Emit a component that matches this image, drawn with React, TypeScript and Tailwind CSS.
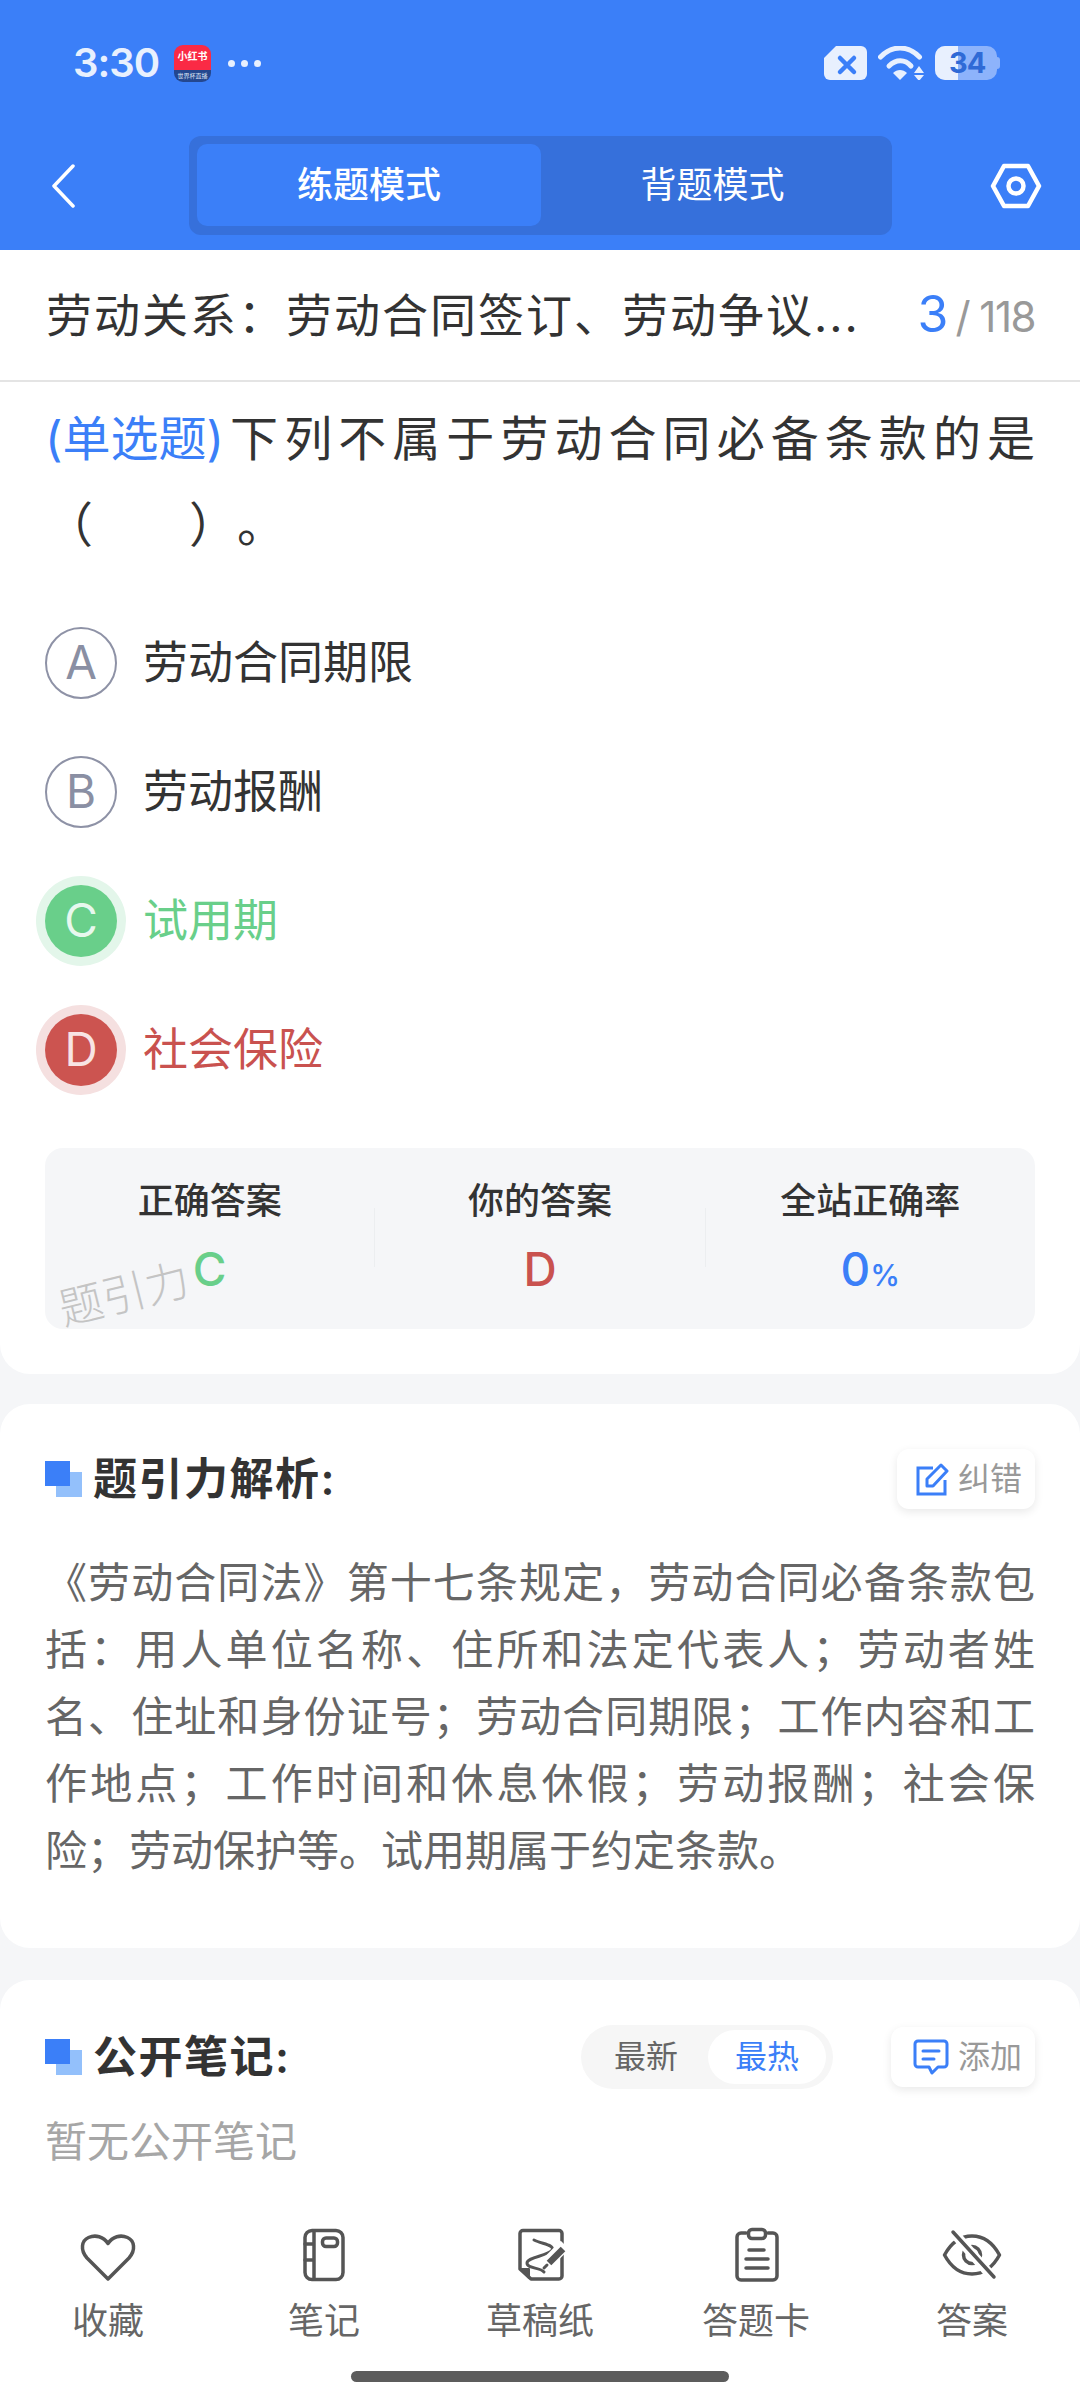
const options = [
  { key: 'A', text: '劳动合同期限', state: 'idle' },
  { key: 'B', text: '劳动报酬', state: 'idle' },
  { key: 'C', text: '试用期', state: 'right' },
  { key: 'D', text: '社会保险', state: 'wrong' },
];

function OptionRow({ label, text, state }: { label: string; text: string; state: string }) {
  let circle = 'border-2 border-[#8e92a6] text-[#8a8fa3]';
  let color = 'text-[#333333]';
  if (state === 'right') {
    circle = 'bg-[#69cf8a] ring-[9px] ring-[#e3f6ea] text-[#e8f8ee]';
    color = 'text-[#69cf8a]';
  }
  if (state === 'wrong') {
    circle = 'bg-[#cc5450] ring-[9px] ring-[#f5e0e0] text-[#f8e4e4]';
    color = 'text-[#c9524f]';
  }
  return (
    <div className="flex items-center h-[129px]">
      <div className={`w-[72px] h-[72px] rounded-full flex items-center justify-center text-[46px] font-normal ${circle}`}>
        {label}
      </div>
      <span className={`ml-[26px] text-[45px] leading-[60px] ${color}`}>{text}</span>
    </div>
  );
}

function SectionMark() {
  return (
    <div className="w-[37px] h-[36px] shrink-0 bg-[linear-gradient(#93c0fb,#93c0fb)] bg-[length:26px_25px] bg-[position:11px_11px] bg-no-repeat">
      <div className="w-[25px] h-[25px] bg-[#3b7ff8]" />
    </div>
  );
}

function SmallAction({ icon, text, width }: { icon: React.ReactNode; text: string; width: string }) {
  return (
    <div className={`h-[60px] ${width} rounded-[12px] bg-white shadow-[0_3px_10px_rgba(0,0,0,0.09)] flex items-center justify-end pr-[13px] gap-[9px]`}>
      {icon}
      <span className="text-[32px] leading-[40px] text-[#999999]">{text}</span>
    </div>
  );
}

function NavIcon({ name }: { name: string }) {
  return (
    <svg width="60" height="60" viewBox="0 0 60 60" fill="none" stroke="#555555" strokeWidth="3.5" strokeLinecap="round" strokeLinejoin="round">
      {name === 'heart' && (
        <path d="M30 54 L9 33 C2 25 3.5 15.5 10.5 12.5 C17.5 9.5 25.5 11.5 30 18.5 C34.5 11.5 42.5 9.5 49.5 12.5 C56.5 15.5 58 25 51 33 Z" />
      )}
      {name === 'note' && (
        <>
          <rect x="11" y="5.5" width="38" height="49" rx="7" />
          <path d="M20 6 V54 M11 19 H20 M11 35 H20" />
          <rect x="28.5" y="13" width="15" height="8.5" rx="3.5" />
        </>
      )}
      {name === 'draft' && (
        <>
          <path d="M13 5.5 H49 a3 3 0 0 1 3 3 V51 a3 3 0 0 1 -3 3 H21 L10 44 V8.5 a3 3 0 0 1 3 -3 Z" />
          <path d="M10.5 44 H19 V53 Z" fill="#555555" strokeWidth="2" />
          <path d="M24 15 C32 19 45 20 42 25 C38 31 17 32 17 38 C17 44 30 42 34 47" strokeWidth="3" />
          <path d="M55 20 L38 37" stroke="#ffffff" strokeWidth="12" strokeLinecap="butt" />
          <path d="M53 24 L39 38" strokeWidth="6.5" strokeLinecap="butt" />
          <path d="M37 40 L34 43" strokeWidth="3" />
        </>
      )}
      {name === 'card' && (
        <>
          <path d="M20 8 H15 a4 4 0 0 0 -4 4 V51 a4 4 0 0 0 4 4 H47 a4 4 0 0 0 4 -4 V12 a4 4 0 0 0 -4 -4 H42" />
          <rect x="22.5" y="4.5" width="17" height="9" rx="3.5" />
          <path d="M23 25 H38 M20 34 H42 M20 43 H42" />
        </>
      )}
      {name === 'eye' && (
        <>
          <path d="M2.5 30 C9 18 19 11 30 11 C41 11 51 18 57.5 30 C51 42 41 49 30 49 C19 49 9 42 2.5 30 Z" />
          <circle cx="30" cy="30" r="8.5" />
          <path d="M11 7 L52 54" stroke="#ffffff" strokeWidth="10" strokeLinecap="butt" />
          <path d="M11 7 L52 52" />
        </>
      )}
    </svg>
  );
}

const navItems = [
  { icon: 'heart', label: '收藏' },
  { icon: 'note', label: '笔记' },
  { icon: 'draft', label: '草稿纸' },
  { icon: 'card', label: '答题卡' },
  { icon: 'eye', label: '答案' },
];

export default function App() {
  return (
    <div className="w-[1080px] h-[2400px] overflow-hidden flex flex-col bg-[#f5f6f8] [font-family:'Inter','Noto_Sans_CJK_SC',sans-serif] [text-spacing-trim:space-all]">
      {/* Header */}
      <header className="bg-[#3b7ff8] h-[250px] shrink-0">
        <div className="h-[126px] flex items-center pl-[73px] pr-[80px]">
          <span className="text-[40px] font-semibold text-[#e8f0fe] tracking-[-1px] leading-none w-[101px]">3:30</span>
          <div className="w-[37px] h-[37px] rounded-[9px] overflow-hidden flex flex-col">
            <div className="h-[25px] bg-[#fa2a45] text-white text-[10px] font-bold leading-[22px] text-center">小红书</div>
            <div className="flex-1 bg-[#24478f] text-[#dfe6f5] text-[6px] leading-[12px] text-center">世界杯直播</div>
          </div>
          <div className="flex gap-[6px] ml-[17px]">
            <span className="w-[7px] h-[7px] rounded-full bg-[#e8f0fe]" />
            <span className="w-[7px] h-[7px] rounded-full bg-[#e8f0fe]" />
            <span className="w-[7px] h-[7px] rounded-full bg-[#e8f0fe]" />
          </div>
          <div className="ml-auto flex items-center gap-[11px]">
            <svg width="43" height="34" viewBox="0 0 43 34">
              <path d="M12 0 H37 a6 6 0 0 1 6 6 V28 a6 6 0 0 1 -6 6 H6 a6 6 0 0 1 -6 -6 V12 Z" fill="#e8f0fe" />
              <path d="M16 12 L30 26 M30 12 L16 26" stroke="#3b7ff8" strokeWidth="4.5" strokeLinecap="round" />
            </svg>
            <svg width="47" height="34" viewBox="0 0 47 34" fill="none" stroke="#e8f0fe" strokeLinecap="round">
              <path d="M2.5 11 C14 -1 30 -1 41.5 11" strokeWidth="5" />
              <path d="M11 20 C18 13 27 13 33 20" strokeWidth="5" />
              <path d="M15 27 C19 23 25 23 29 27 L22 34 Z" fill="#e8f0fe" stroke="none" />
              <path d="M36 27 L41 20 L46 27 Z M36 29 H46 L41 35 Z" fill="#e8f0fe" stroke="none" />
            </svg>
            <div className="relative w-[65px] h-[34px] -ml-[1px]">
              <div className="w-[62px] h-[34px] rounded-[10px] overflow-hidden bg-[#8db3fb]">
                <div className="w-[23px] h-[34px] bg-[#e8f0fe]" />
              </div>
              <div className="absolute right-0 top-[11px] w-[4px] h-[12px] rounded-r-[3px] bg-[#8db3fb]" />
              <span className="absolute left-[14px] top-0 text-[29px] tracking-[-1px] leading-[34px] font-bold text-[#2f6ad6]">34</span>
            </div>
          </div>
        </div>
        <div className="h-[124px] pb-[5px] flex items-center pl-[50px]">
          <svg width="26" height="44" viewBox="0 0 26 44" fill="none" stroke="#ffffff" strokeWidth="3.5" strokeLinecap="round" strokeLinejoin="round">
            <path d="M23 2 L4 22 L23 42" />
          </svg>
          <div className="ml-[113px] w-[703px] h-[99px] rounded-[12px] bg-[#3670db] p-[8px] flex text-[36px] leading-[50px] text-white">
            <div className="w-[344px] h-[82px] rounded-[10px] bg-[#3b7ff8] font-medium flex items-center justify-center">练题模式</div>
            <div className="flex-1 h-[82px] flex items-center justify-center">背题模式</div>
          </div>
          <svg className="ml-[98px]" width="52" height="46" viewBox="0 0 52 46" fill="none" stroke="#ffffff" strokeWidth="4.5" strokeLinejoin="round">
            <path d="M14 3 H38 L49 23 L38 43 H14 L3 23 Z" />
            <circle cx="26" cy="23" r="7.5" />
          </svg>
        </div>
      </header>

      {/* Chapter title */}
      <div className="bg-white h-[132px] shrink-0 border-b-2 border-[#e4e4e4] flex items-center justify-between pl-[46px] pr-[45px]">
        <span className="text-[46px] tracking-[2px] text-[#333333] leading-[60px]">劳动关系：劳动合同签订、劳动争议...</span>
        <div className="flex items-baseline leading-[60px]">
          <span className="text-[50px] text-[#3b7ff8]">3</span>
          <span className="text-[42px] text-[#999999] ml-[7px] tracking-[-1.5px]">/ 118</span>
        </div>
      </div>

      {/* Question */}
      <section className="bg-white rounded-b-[30px] shrink-0 pt-[14px] px-[45px] pb-[45px]">
        <p className="text-[48px] leading-[86px] text-[#333333] text-justify">
          <span className="inline-block text-[#3b7ff8]">(单选题)</span>下列不属于劳动合同必备条款的是
          <span className="inline-block">（　　）。</span>
        </p>
        <div className="mt-[30px]">
          {options.map((o) => (
            <OptionRow key={o.key} label={o.key} text={o.text} state={o.state} />
          ))}
        </div>
        <div className="relative mt-[34px] h-[181px] rounded-[18px] bg-[#f5f6f8] flex">
          <div className="flex-1 flex flex-col items-center pt-[33px]">
            <span className="text-[36px] leading-[40px] font-medium text-[#333333]">正确答案</span>
            <span className="mt-[20px] text-[46px] leading-[56px] font-medium text-[#69cf8a]">C</span>
          </div>
          <div className="w-px h-[59px] mt-[60px] bg-[#eceef0]" />
          <div className="flex-1 flex flex-col items-center pt-[33px]">
            <span className="text-[36px] leading-[40px] font-medium text-[#333333]">你的答案</span>
            <span className="mt-[20px] text-[46px] leading-[56px] font-medium text-[#c9524f]">D</span>
          </div>
          <div className="w-px h-[59px] mt-[60px] bg-[#eceef0]" />
          <div className="flex-1 flex flex-col items-center pt-[33px]">
            <span className="text-[36px] leading-[40px] font-medium text-[#333333]">全站正确率</span>
            <span className="mt-[20px] text-[46px] leading-[56px] font-medium text-[#3b7ff8]">
              0<span className="text-[30px]">%</span>
            </span>
          </div>
          <span className="absolute left-[13px] top-[121px] -rotate-[14deg] text-[44px] leading-[50px] font-light text-[#c4c4c4]">题引力</span>
        </div>
      </section>

      {/* Analysis */}
      <section className="bg-white rounded-[30px] shrink-0 mt-[30px] pt-[45px] pb-[64px] px-[45px]">
        <div className="flex items-center justify-between h-[60px]">
          <div className="flex items-center gap-[11px]">
            <SectionMark />
            <h2 className="text-[44px] leading-[60px] font-semibold tracking-[1.5px] text-[#333333]">题引力解析:</h2>
          </div>
          <SmallAction
            width="w-[138px]"
            text="纠错"
            icon={
              <svg width="33" height="34" viewBox="0 0 33 34" fill="none" stroke="#3b7ff8" strokeWidth="3">
                <path d="M17 6 H2 V32 H29 V18" />
                <path d="M11 24 V17 L25 3 L31 9 L17 24 Z" strokeLinejoin="round" />
              </svg>
            }
          />
        </div>
        <p className="mt-[40px] text-[42px] leading-[67px] text-[#666666] text-justify">
          《劳动合同法》第十七条规定，劳动合同必备条款包括：用人单位名称、住所和法定代表人；劳动者姓名、住址和身份证号；劳动合同期限；工作内容和工作地点；工作时间和休息休假；劳动报酬；社会保险；劳动保护等。试用期属于约定条款。
        </p>
      </section>

      {/* Public notes + bottom bar */}
      <section className="bg-white rounded-t-[30px] flex-1 mt-[32px] pt-[45px] flex flex-col">
        <div className="flex items-center h-[64px] px-[45px]">
          <SectionMark />
          <h2 className="ml-[11px] text-[44px] leading-[60px] font-semibold tracking-[1.5px] text-[#333333]">公开笔记:</h2>
          <div className="ml-auto w-[252px] h-[64px] rounded-full bg-[#f6f6f6] flex items-center text-[32px] leading-[40px]">
            <span className="w-[127px] pl-[3px] text-center text-[#666666]">最新</span>
            <span className="w-[118px] h-[54px] rounded-full bg-white text-[#3b7ff8] flex items-center justify-center">最热</span>
          </div>
          <div className="ml-[58px]">
            <SmallAction
              width="w-[144px]"
              text="添加"
              icon={
                <svg width="36" height="36" viewBox="0 0 36 36" fill="none" stroke="#3b7ff8" strokeWidth="3" strokeLinejoin="round" strokeLinecap="round">
                  <path d="M5 2 H31 a3 3 0 0 1 3 3 V25 a3 3 0 0 1 -3 3 H25 L19 34 L16 28 H5 a3 3 0 0 1 -3 -3 V5 a3 3 0 0 1 3 -3 Z" />
                  <path d="M10 12 H26 M10 20 H21" />
                </svg>
              }
            />
          </div>
        </div>
        <p className="mt-[23px] px-[45px] text-[42px] leading-[60px] text-[#a6a6a6]">暂无公开笔记</p>

        <nav className="mt-auto">
          <div className="grid grid-cols-5">
            {navItems.map((item) => (
              <div key={item.label} className="flex flex-col items-center">
                <NavIcon name={item.icon} />
                <span className="mt-[16px] text-[36px] leading-[40px] text-[#666666]">{item.label}</span>
              </div>
            ))}
          </div>
          <div className="mt-[30px] mb-[18px] mx-auto w-[378px] h-[11px] rounded-full bg-[#5c5c5c]" />
        </nav>
      </section>
    </div>
  );
}
